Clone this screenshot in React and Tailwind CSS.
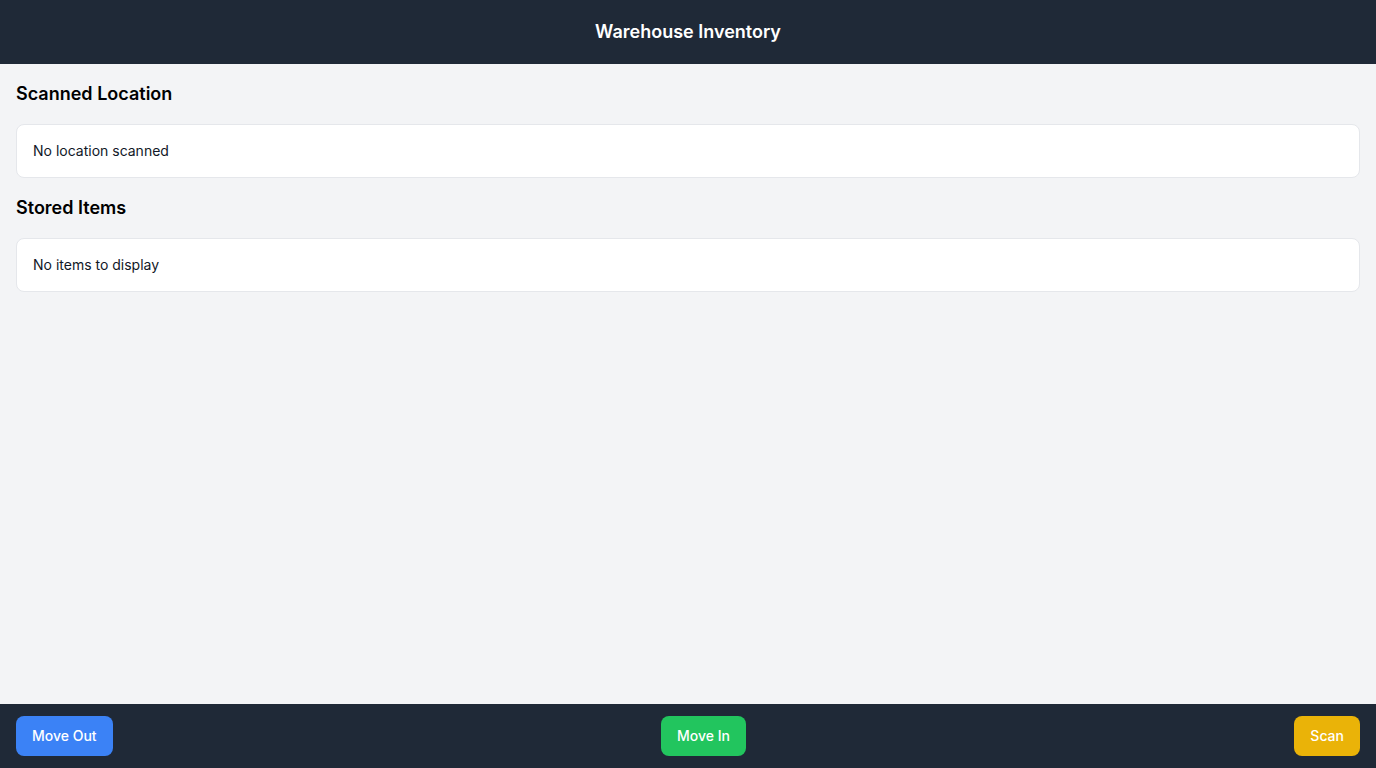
export default function App() {
  return (
    <div className="flex h-screen flex-col bg-[#f3f4f6] font-['Inter',sans-serif] text-[#111827]">
      {/* Header */}
      <header className="flex h-16 shrink-0 items-center justify-center bg-[#1f2937]">
        <h1 className="text-lg font-semibold text-white">Warehouse Inventory</h1>
      </header>

      {/* Content */}
      <main className="flex-1 overflow-auto p-4">
        <h2 className="mb-4 text-lg font-semibold text-black">Scanned Location</h2>
        <div className="mb-4 rounded-lg border border-[#e5e7eb] bg-white px-4 py-4 text-sm">
          No location scanned
        </div>

        <h2 className="mb-4 text-lg font-semibold text-black">Stored Items</h2>
        <div className="rounded-lg border border-[#e5e7eb] bg-white px-4 py-4 text-sm">
          No items to display
        </div>
      </main>

      {/* Footer */}
      <footer className="flex h-16 shrink-0 items-center justify-between bg-[#1f2937] px-4">
        <button className="rounded-lg bg-[#3b82f6] px-4 py-2.5 text-sm font-medium text-white">
          Move Out
        </button>
        <button className="rounded-lg bg-[#22c55e] px-4 py-2.5 text-sm font-medium text-white">
          Move In
        </button>
        <button className="rounded-lg bg-[#eab308] px-4 py-2.5 text-sm font-medium text-white">
          Scan
        </button>
      </footer>
    </div>
  );
}
